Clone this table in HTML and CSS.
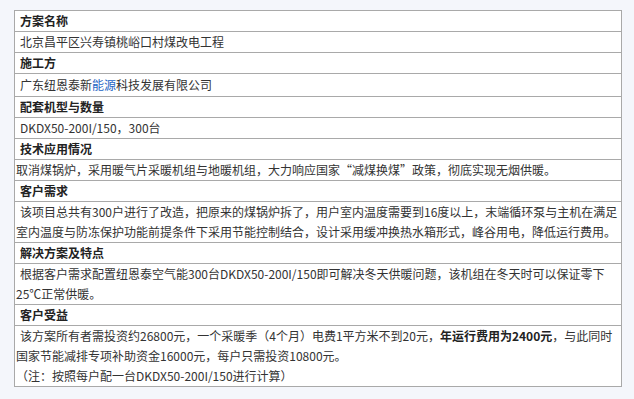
FILE: index.html
```html
<!DOCTYPE html>
<html lang="zh-CN">
<head>
<meta charset="utf-8">
<title>方案</title>
<link rel="stylesheet" href="styles.css">
</head>
<body>
<table class="spec">
  <tr><th class="ind">方案名称</th></tr>
  <tr><td class="ind">北京昌平区兴寿镇桃峪口村煤改电工程</td></tr>
  <tr><th class="ind">施工方</th></tr>
  <tr><td class="ind tall">广东纽恩泰新<a class="link" href="#">能源</a>科技发展有限公司</td></tr>
  <tr><th class="ind">配套机型与数量</th></tr>
  <tr><td class="ind">DKDX50-200I/150，300台</td></tr>
  <tr><th class="ind">技术应用情况</th></tr>
  <tr><td>取消煤锅炉，采用暖气片采暖机组与地暖机组，大力响应国家“减煤换煤”政策，彻底实现无烟供暖。</td></tr>
  <tr><th class="ind">客户需求</th></tr>
  <tr><td class="ind nw">该项目总共有300户进行了改造，把原来的煤锅炉拆了，用户室内温度需要到16度以上，末端循环泵与主机在满足<br>室内温度与防冻保护功能前提条件下采用节能控制结合，设计采用缓冲换热水箱形式，峰谷用电，降低运行费用。</td></tr>
  <tr><th class="ind">解决方案及特点</th></tr>
  <tr><td class="ind nw">根据客户需求配置纽恩泰空气能300台DKDX50-200I/150即可解决冬天供暖问题，该机组在冬天时可以保证零下<br>25℃正常供暖。</td></tr>
  <tr><th class="ind">客户受益</th></tr>
  <tr><td class="ind nw">该方案所有者需投资约26800元，一个采暖季（4个月）电费1平方米不到20元，<strong>年运行费用为2400元</strong>，与此同时<br>国家节能减排专项补助资金16000元，每户只需投资10800元。<br>（注：按照每户配一台DKDX50-200I/150进行计算）</td></tr>
</table>
</body>
</html>
```

FILE: styles.css
```css
html, body {
  margin: 0;
  padding: 0;
  background: #f4f6fb;
}
body {
  padding: 10px 0 0 14px;
  font-family: "Noto Sans CJK SC", "Microsoft YaHei", sans-serif;
  font-size: 12px;
  color: #333333;
}
.spec {
  width: 608px;
  border-collapse: collapse;
  table-layout: fixed;
  background: #ffffff;
}
.spec th,
.spec td {
  border: 1px solid #a9a9a9;
  padding: 0 1px;
  height: 20px;
  line-height: 20px;
  text-align: left;
  vertical-align: middle;
}
.spec th {
  font-weight: bold;
  color: #222222;
}
.spec td.tall {
  height: 22px;
}
.ind {
  text-indent: 4px;
}
.nw {
  white-space: nowrap;
}
.link {
  color: #2365c4;
  text-decoration: none;
}
strong {
  font-weight: bold;
  color: #222222;
}
```
